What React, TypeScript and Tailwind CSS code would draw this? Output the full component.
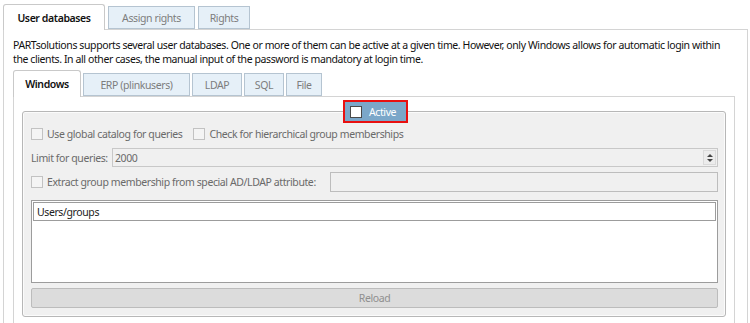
import React from 'react'

function Check() {
  return <span className="inline-block w-[12px] h-[12px] border border-[#c2c2c2] bg-[#f4f4f4] shrink-0" />
}

function Tab({ label, active = false, w, h = 'h-[27px]' }: { label: string; active?: boolean; w: string; h?: string }) {
  if (active) {
    return (
      <div
        className={`${w} ${h} -mb-px relative z-10 bg-white border border-b-0 border-[#c9c9c9] rounded-t-[3px] flex items-center justify-center font-semibold text-[#111]`}
      >
        {label}
      </div>
    )
  }
  return (
    <div
      className={`${w} h-[23px] border border-[#b5c4d1] bg-[#e6f0f8] flex items-center justify-center text-[#7d7d7d]`}
    >
      {label}
    </div>
  )
}

export default function App() {
  return (
    <div
      className="w-[750px] h-[323px] bg-white overflow-hidden text-[10.5px] leading-[14px] tracking-[-0.4px] text-[#111]"
      style={{ fontFamily: '"Noto Sans", "Open Sans", sans-serif' }}
    >
      {/* outer tabs */}
      <div className="flex items-end gap-[3px] pl-[3px] h-[29px]">
        <Tab label="User databases" active w="w-[102px]" h="h-[26px]" />
        <Tab label="Assign rights" w="w-[87px]" />
        <Tab label="Rights" w="w-[52px]" />
      </div>

      <div className="ml-[3px] w-[745px] h-[300px] border border-[#d4d4d4] bg-white">
        <p className="pl-[9px] pt-[8px] pr-2 whitespace-nowrap">
          PARTsolutions supports several user databases. One or more of them can be active at a given time. However, only Windows allows for automatic login within
          <br />
          the clients. In all other cases, the manual input of the password is mandatory at login time.
        </p>

        {/* inner tabs */}
        <div className="flex items-end gap-[2px] pl-[9px] mt-[4px] h-[26px]">
          <Tab label="Windows" active w="w-[68px]" />
          <Tab label="ERP (plinkusers)" w="w-[107px]" />
          <Tab label="LDAP" w="w-[50px]" />
          <Tab label="SQL" w="w-[40px]" />
          <Tab label="File" w="w-[36px]" />
        </div>

        <div className="ml-[9px] w-[722px] h-[240px] border border-[#d4d4d4] bg-white pt-[14px] pl-[8px]">
          <div className="relative w-[704px] h-[206px] border border-[#b7b7b7] rounded-[3px] bg-[#f0f0f0] shadow-[inset_0_0_0_1px_#fbfbfb] pl-[8px] pr-[7px] text-[#6a6a6a]">
            {/* Active overlay */}
            <div className="absolute left-[320px] top-[-12px] w-[65px] h-[23px] border-2 border-[#e81010] bg-[#7ba7c9] flex items-center gap-[7px] pl-[5px]">
              <span className="inline-block w-[12px] h-[12px] border border-[#4a4a4a] bg-white" />
              <span className="text-white">Active</span>
            </div>

            <div className="flex items-center h-[18px] mt-[13px] gap-[4px]">
              <Check />
              <span>Use global catalog for queries</span>
              <span className="w-[3px]" />
              <Check />
              <span>Check for hierarchical group memberships</span>
            </div>

            <div className="flex items-center mt-[5px] h-[19px]">
              <span className="w-[81px] whitespace-nowrap">Limit for queries:</span>
              <div className="flex-1 h-[19px] border border-[#c8c8c8] bg-[#f0f0f0] flex items-center pl-[2px] pr-[1px]">
                <span className="flex-1">2000</span>
                <div className="w-[13px] h-[15px] border border-[#dadada] bg-[#ececec] flex flex-col items-center justify-center gap-[2px]">
                  <span className="w-0 h-0 border-l-[3px] border-r-[3px] border-b-[3px] border-l-transparent border-r-transparent border-b-[#444]" />
                  <span className="w-0 h-0 border-l-[3px] border-r-[3px] border-t-[3px] border-l-transparent border-r-transparent border-t-[#444]" />
                </div>
              </div>
            </div>

            <div className="flex items-center mt-[5px] h-[20px] gap-[4px]">
              <Check />
              <span className="w-[279px] whitespace-nowrap">Extract group membership from special AD/LDAP attribute:</span>
              <div className="flex-1 h-[20px] border border-[#bdbdbd] bg-[#f0f0f0]" />
            </div>

            <div className="mt-[8px] h-[83px] border border-[#9c9c9c] bg-white p-px">
              <div className="h-[19px] border border-[#9c9c9c] flex items-center pl-[3px] text-[#222]">
                Users/groups
              </div>
            </div>

            <div className="mt-[5px] h-[20px] border border-[#bcbcbc] rounded-[2px] bg-[#dcdcdc] flex items-center justify-center text-[#8f8f8f]">
              Reload
            </div>
          </div>
        </div>
      </div>
    </div>
  )
}
